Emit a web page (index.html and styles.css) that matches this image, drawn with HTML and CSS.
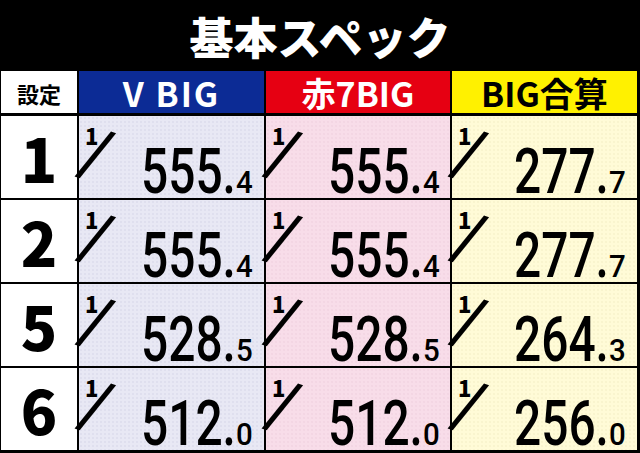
FILE: index.html
```html
<!DOCTYPE html>
<html lang="ja">
<head>
<meta charset="utf-8">
<title>基本スペック</title>
<link rel="stylesheet" href="styles.css">
</head>
<body>
<div class="page">
  <h1 class="title">基本スペック</h1>
  <div class="spec">
    <div class="hd hd-set">設定</div>
    <div class="hd hd-v">V BIG</div>
    <div class="hd hd-r">赤7BIG</div>
    <div class="hd hd-y">BIG合算</div>

    <div class="set">1</div>
    <div class="cell c-v"><span class="frac"><span class="one">1</span><span class="sl">/</span></span><span class="val"><span class="int">555.</span><span class="dec">4</span></span></div>
    <div class="cell c-r"><span class="frac"><span class="one">1</span><span class="sl">/</span></span><span class="val"><span class="int">555.</span><span class="dec">4</span></span></div>
    <div class="cell c-y"><span class="frac"><span class="one">1</span><span class="sl">/</span></span><span class="val"><span class="int">277.</span><span class="dec">7</span></span></div>

    <div class="set">2</div>
    <div class="cell c-v"><span class="frac"><span class="one">1</span><span class="sl">/</span></span><span class="val"><span class="int">555.</span><span class="dec">4</span></span></div>
    <div class="cell c-r"><span class="frac"><span class="one">1</span><span class="sl">/</span></span><span class="val"><span class="int">555.</span><span class="dec">4</span></span></div>
    <div class="cell c-y"><span class="frac"><span class="one">1</span><span class="sl">/</span></span><span class="val"><span class="int">277.</span><span class="dec">7</span></span></div>

    <div class="set">5</div>
    <div class="cell c-v"><span class="frac"><span class="one">1</span><span class="sl">/</span></span><span class="val"><span class="int">528.</span><span class="dec">5</span></span></div>
    <div class="cell c-r"><span class="frac"><span class="one">1</span><span class="sl">/</span></span><span class="val"><span class="int">528.</span><span class="dec">5</span></span></div>
    <div class="cell c-y"><span class="frac"><span class="one">1</span><span class="sl">/</span></span><span class="val"><span class="int">264.</span><span class="dec">3</span></span></div>

    <div class="set">6</div>
    <div class="cell c-v"><span class="frac"><span class="one">1</span><span class="sl">/</span></span><span class="val"><span class="int">512.</span><span class="dec">0</span></span></div>
    <div class="cell c-r"><span class="frac"><span class="one">1</span><span class="sl">/</span></span><span class="val"><span class="int">512.</span><span class="dec">0</span></span></div>
    <div class="cell c-y"><span class="frac"><span class="one">1</span><span class="sl">/</span></span><span class="val"><span class="int">256.</span><span class="dec">0</span></span></div>
  </div>
</div>
</body>
</html>
```

FILE: styles.css
```css
html, body {
  margin: 0;
  padding: 0;
  background: #000;
}
body {
  width: 640px;
  min-height: 453px;
  font-family: "Noto Sans CJK JP", "Noto Sans", sans-serif;
}
.page {
  display: flex;
  flex-direction: column;
}
.title {
  margin: 0;
  height: 71px;
  display: flex;
  align-items: center;
  justify-content: center;
  color: #fff;
  font-family: "Noto Sans CJK JP", sans-serif;
  font-weight: 900;
  font-size: 44px;
  line-height: 1;
}
.spec {
  margin-left: 1px;
  display: grid;
  grid-template-columns: 76px 185px 184px 185px;
  grid-template-rows: 43px repeat(4, 82px);
  gap: 2px;
}
.hd {
  display: flex;
  align-items: center;
  justify-content: center;
  font-family: "Noto Sans CJK JP", sans-serif;
  font-weight: 700;
  font-size: 34px;
  line-height: 1;
  padding-top: 1px;
  margin-bottom: 1px;
}
.hd-set {
  background: #fff;
  color: #000;
  font-size: 22px;
}
.hd-v {
  background: #0c2b95;
  color: #fff;
  letter-spacing: 2px;
}
.hd-r {
  background: #e60012;
  color: #fff;
}
.hd-y {
  background: #fff100;
  color: #000;
}
.set {
  background: #fff;
  display: flex;
  align-items: center;
  justify-content: center;
  font-family: "Noto Sans CJK JP", sans-serif;
  font-weight: 900;
  font-size: 60px;
  line-height: 1;
  color: #000;
}
.cell {
  display: flex;
  justify-content: space-between;
  padding: 0 10px 0 3px;
  color: #000;
  background-size: 4px 4px;
}
.c-v {
  background-color: #e8e8f4;
  background-image: radial-gradient(rgba(60, 60, 120, 0.05) 0.7px, transparent 1px);
}
.c-r {
  background-color: #f8dde9;
  background-image: radial-gradient(rgba(140, 60, 90, 0.04) 0.7px, transparent 1px);
}
.c-y {
  background-color: #fffbd7;
  background-image: radial-gradient(rgba(140, 130, 40, 0.05) 0.7px, transparent 1px);
}
.frac {
  display: grid;
  align-self: flex-start;
  width: 36px;
  height: 42px;
  margin-top: 11px;
}
.frac > span {
  grid-area: 1 / 1;
}
.one {
  font-family: "Noto Sans CJK JP", sans-serif;
  font-weight: 900;
  font-size: 22px;
  line-height: 16px;
  margin-left: 3px;
  align-self: start;
  justify-self: start;
}
.sl {
  font-family: "Roboto", sans-serif;
  font-weight: 400;
  font-size: 70px;
  line-height: 70px;
  align-self: center;
  justify-self: center;
  margin-top: -8px;
  transform: rotate(18deg);
}
.val {
  align-self: flex-end;
  line-height: 50px;
  height: 50px;
  margin-bottom: 1px;
  white-space: nowrap;
  font-family: "Roboto", sans-serif;
  font-weight: 500;
}
.int {
  display: inline-block;
  font-size: 63px;
  line-height: 50px;
  transform: scaleX(0.76);
  transform-origin: right bottom;
}
.dec {
  display: inline-block;
  font-size: 31px;
  line-height: 50px;
  transform: scaleX(0.95);
  transform-origin: left bottom;
}
```
